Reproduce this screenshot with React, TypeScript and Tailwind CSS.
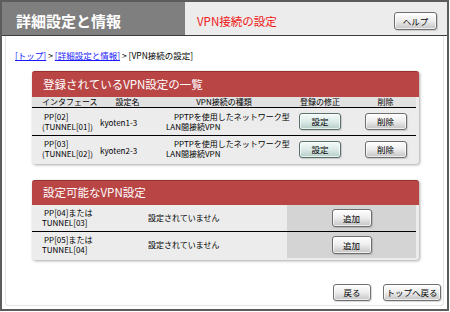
import React from 'react';

type BtnProps = { children: React.ReactNode; className?: string; tint?: boolean };

function Btn({ children, className = '', tint = false }: BtnProps) {
  const face = tint
    ? 'border-[#56706b] from-[#f4fbf9] via-[#dcebe7] to-[#b4cdc7]'
    : 'border-[#6e6e6e] from-white via-[#ececec] to-[#c4c4c4]';
  return (
    <button
      className={`rounded-[3px] border bg-linear-to-b ${face} text-[8.5px] leading-none text-black shadow-[inset_0_0_0_1px_rgba(255,255,255,0.7),1px_1px_1px_rgba(0,0,0,0.15)] ${className}`}
    >
      {children}
    </button>
  );
}

const registered = [
  { pp: 'PP[02]', tunnel: '(TUNNEL[01])', name: 'kyoten1-3' },
  { pp: 'PP[03]', tunnel: '(TUNNEL[02])', name: 'kyoten2-3' },
];

const available = [
  { pp: 'PP[04]または', tunnel: 'TUNNEL[03]' },
  { pp: 'PP[05]または', tunnel: 'TUNNEL[04]' },
];

export default function App() {
  return (
    <div className="w-[450px] h-[312px] bg-white font-['Noto_Sans_CJK_JP',sans-serif] text-black">
      <div className="w-[449px] h-[311px] border-2 border-[#5c5c5c] flex flex-col">
        {/* title bar */}
        <div className="h-[34px] shrink-0 flex border-b border-[#3c3c3c]">
          <div className="w-[183px] bg-[#7f7f7f] flex items-center pl-[14px] pt-[6px] text-white text-[15px] font-bold">
            詳細設定と情報
          </div>
          <div className="flex-1 bg-[#ececec] flex pl-[12px]">
            <span className="self-center pt-[6px] text-[11.5px] text-[#f01818]">VPN接続の設定</span>
            <Btn className="ml-auto mr-[10px] mt-[10px] w-[43px] h-[18px]">ヘルプ</Btn>
          </div>
        </div>

        <div className="flex-1 mx-[3px] mb-[3px] border border-t-0 border-[#e4e4e4] rounded-b-[4px] flex flex-col">
          {/* breadcrumb */}
          <div className="mt-[13px] pl-[9px] text-[8.5px] leading-[12px]">
            <a className="text-[#1a1aff] underline">[トップ]</a>
            <span> &gt; </span>
            <a className="text-[#1a1aff] underline">[詳細設定と情報]</a>
            <span> &gt; [VPN接続の設定]</span>
          </div>

          {/* registered list */}
          <div className="mt-[10px] ml-[26px] w-[387px] rounded-[3px] bg-[#ececec] shadow-[1px_1px_3px_rgba(0,0,0,0.35)] pb-[2px]">
            <div className="h-[26px] rounded-t-[3px] bg-[#b94545] border-t border-[#9a2f2f] flex items-center pl-[11px] text-white text-[11.5px]">
              登録されているVPN設定の一覧
            </div>
            <div className="grid grid-cols-[63px_65px_128px_64px_67px] h-[11px] bg-[#e1e1e1] border-b border-black mr-[3px] text-[8px] leading-[10px] whitespace-nowrap">
              <span className="pl-[10px]">インタフェース</span>
              <span className="text-center">設定名</span>
              <span className="text-center">VPN接続の種類</span>
              <span className="text-center">登録の修正</span>
              <span className="text-center">削除</span>
            </div>
            {registered.map((r, i) => (
              <div
                key={r.pp}
                className={`grid grid-cols-[63px_65px_128px_64px_67px] items-center mr-[3px] text-[8px] leading-[10px] ${
                  i === 0 ? 'h-[28px] border-b border-black' : 'h-[26px]'
                }`}
              >
                <div className="pl-[10px] whitespace-nowrap">
                  <div className="pl-[2px]">{r.pp}</div>
                  <div>{r.tunnel}</div>
                </div>
                <span className="pl-[5px] pt-[3px]">{r.name}</span>
                <div className="pl-[6px] whitespace-nowrap">
                  <div className="pl-[8px]">PPTPを使用したネットワーク型</div>
                  <div>LAN間接続VPN</div>
                </div>
                <div className="flex justify-center">
                  <Btn tint className="w-[42px] h-[17px]">設定</Btn>
                </div>
                <div className="flex justify-center">
                  <Btn className="w-[42px] h-[17px]">削除</Btn>
                </div>
              </div>
            ))}
          </div>

          {/* available list */}
          <div className="mt-[16px] ml-[26px] w-[387px] rounded-[3px] bg-[#ececec] shadow-[1px_1px_3px_rgba(0,0,0,0.35)] pb-[2px]">
            <div className="h-[25px] rounded-t-[3px] bg-[#b94545] border-t border-[#9a2f2f] flex items-center pl-[11px] text-white text-[11.5px]">
              設定可能なVPN設定
            </div>
            {available.map((r, i) => (
              <div
                key={r.tunnel}
                className={`grid grid-cols-[110px_145px_1fr] mr-[3px] text-[8px] leading-[10px] ${
                  i === 0 ? 'h-[27px] border-b border-black' : 'h-[26px]'
                }`}
              >
                <div className="pl-[10px] self-center whitespace-nowrap">
                  <div className="pl-[2px]">{r.pp}</div>
                  <div>{r.tunnel}</div>
                </div>
                <span className="pl-[6px] self-center">設定されていません</span>
                <div className="bg-[#d4d4d4] flex items-center justify-center">
                  <Btn className="w-[40px] h-[18px]">追加</Btn>
                </div>
              </div>
            ))}
          </div>

          {/* footer buttons */}
          <div className="mt-auto mb-[4px] mr-[2px] flex justify-end gap-[12px]">
            <Btn className="w-[38px] h-[17px]">戻る</Btn>
            <Btn className="w-[58px] h-[17px]">トップへ戻る</Btn>
          </div>
        </div>
      </div>
    </div>
  );
}
